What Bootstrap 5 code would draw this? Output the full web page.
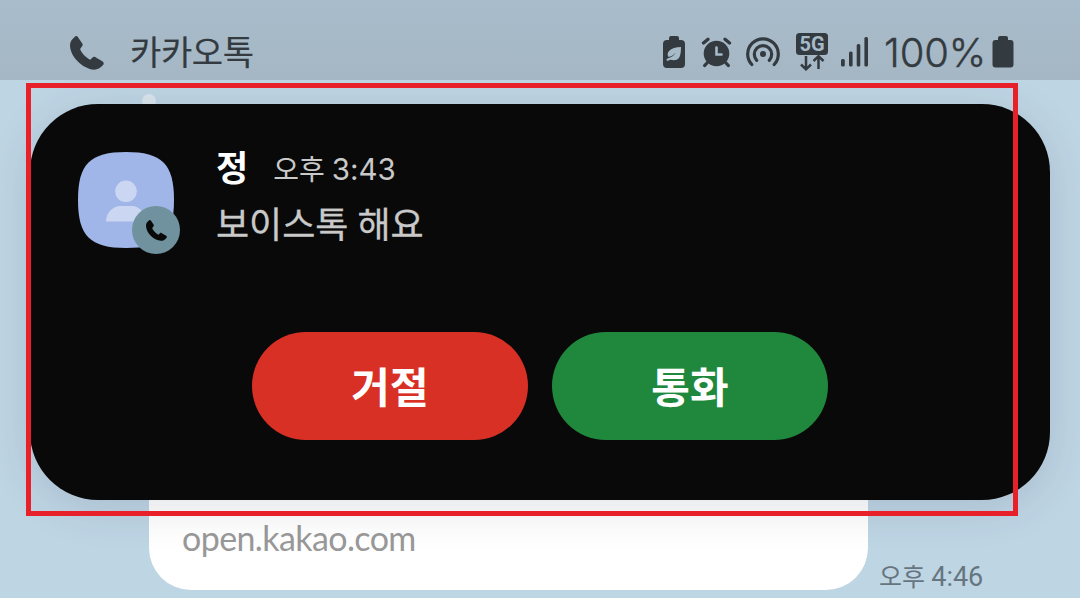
<!DOCTYPE html>
<html lang="ko">
<head>
    <meta charset="utf-8">
    <title>보이스톡</title>
    <link href="https://cdn.jsdelivr.net/npm/bootstrap@5.3.0/dist/css/bootstrap.min.css" rel="stylesheet">
    <style>
        body {
            height: 598px;
            background: #bed5e4;
            font-family: Roboto, "Noto Sans CJK KR", sans-serif;
        }
        svg { display: block; flex: none; }

        .status-bar {
            height: 80px;
            padding: 25px 66px 0 70px;
            background: linear-gradient(#a9bccb, #a5b7c4);
            color: #333a40;
            z-index: 2;
        }
        .app-name { font-size: 34px; line-height: 54px; letter-spacing: -.4px; margin-left: 26px; padding-top: 1px; -webkit-text-stroke: .2px; }
        .percent { font-family: Inter, sans-serif; font-size: 40px; line-height: 54px; font-weight: 300; width: 102px; margin-left: 15px; letter-spacing: -.1px; padding-top: 1px; -webkit-text-stroke: .4px; }
        .status-icons { height: 54px; }
        .alarm-icon { margin-left: 16px; }
        .hotspot-icon { margin-left: 14px; }
        .data-icon { margin-left: 16px; margin-top: -1px; }
        .signal-icon { margin-left: 13px; }
        .battery-icon { margin-left: 6px; }

        .call-card {
            height: 396px;
            margin: 24.400px 30px 0;
            padding: 48px;
            border-radius: 68px;
            background: #090909;
            box-shadow: 0 8px 44px rgba(40, 50, 80, .14);
            z-index: 1;
        }
        .avatar { width: 96px; height: 96px; margin-right: 42px; }
        .call-badge {
            right: -6px;
            bottom: -6px;
            width: 48px;
            height: 48px;
            background: #70929e;
        }
        .caller { font-size: 35px; line-height: 36px; font-weight: 700; color: #fff; }
        .call-time { font-size: 28px; line-height: 34px; color: #c9c9c9; margin-left: 25px; }
        .call-time .digits { font-family: Inter, sans-serif; font-size: 29.500px; }
        .call-text { font-size: 36px; line-height: 48px; color: #c9c9c9; margin-top: 14px; -webkit-text-stroke: .3px; }
        .call-profile { height: 96px; }
        .call-actions { gap: 24px; margin-top: 84px; }
        .call-btn {
            width: 276px;
            height: 108px;
            padding-top: 10px;
            border: 0;
            font-size: 42px;
            font-weight: 700;
            color: #fff;
        }
        .call-btn-decline, .call-btn-decline:hover { background: #d93026; color: #fff; }
        .call-btn-accept, .call-btn-accept:hover { background: #1f883d; color: #fff; }

        .chat-row { padding-left: 149px; }
        .bubble {
            width: 719px;
            height: 90px;
            padding: 13px 33px;
            border-radius: 0 0 42px 42px;
            background: #fff;
            color: #999;
            font-family: Lato, sans-serif;
            font-size: 34px;
            letter-spacing: -.6px;
            line-height: 50px;
        }
        .sent-time { font-size: 25px; line-height: 24px; color: #66757f; margin-left: 11px; }
        .sent-time .digits { font-size: 27px; }
        .bubble-dot { left: 142px; top: 94px; width: 14px; height: 14px; background: #d9e5ed; z-index: 1; }

        .outline-box {
            left: 26px;
            top: 82.500px;
            width: 992px;
            height: 433px;
            border: 5px solid #e8202a;
            z-index: 3;
        }
    </style>
</head>
<body class="position-relative overflow-hidden d-flex flex-column">

    <header class="status-bar position-relative d-flex align-items-start flex-shrink-0">
        <div class="d-flex align-items-center">
            <svg width="34" height="34" viewBox="0 0 104 104" fill="currentColor">
                <path id="handset" d="M14 3C17-1 22 0 24 3L38 24C40 28 38 31 35 34L31 40C34 52 50 67 62 73L69 66C72 63 75 63 78 65L100 78C104 81 104 86 101 89C93 99 84 103 74 103C38 100 0 62 0 28C0 18 5 11 14 3Z"/>
            </svg>
            <span class="app-name">카카오톡</span>
        </div>
        <div class="status-icons ms-auto d-flex align-items-center">
            <!-- power saving -->
            <svg width="22" height="32" viewBox="0 0 22 32" fill="currentColor">
                <path d="M6 4V2Q6 0 8 0H14Q16 0 16 2V4H18Q22 4 22 8V28Q22 32 18 32H4Q0 32 0 28V8Q0 4 4 4Z"/>
                <path d="M18 11Q10 11 6 15Q3.500 18 5.500 21Q9 20.500 13 16.500Q10 21 3.500 23L4 25L7.500 23.800Q14 25.500 16.500 21Q18 18 18 11Z" fill="#a7bac8"/>
            </svg>
            <!-- alarm -->
            <svg class="alarm-icon" width="31" height="31" viewBox="0 0 31 31" fill="none" stroke="currentColor" stroke-width="3.300" stroke-linecap="round">
                <circle cx="15.500" cy="16.500" r="12.800" fill="currentColor" stroke="none"/>
                <path d="M2.500 6L7 2.200M28.500 6L24 2.200M6 26L3.700 28.500M25 26L27.300 28.500"/>
                <path d="M15.500 10.500V17.500H20.500" stroke="#a7bac8" stroke-width="2.600"/>
            </svg>
            <!-- hotspot -->
            <svg class="hotspot-icon" width="34" height="30" viewBox="0 0 34 30" fill="none" stroke="currentColor" stroke-width="3.200" stroke-linecap="round">
                <circle cx="17" cy="17" r="3" fill="currentColor" stroke="none"/>
                <path d="M5.800 27.500A15.300 15.300 0 1 1 28.200 27.500"/>
                <path d="M10.700 23.300A8.700 8.700 0 1 1 23.300 23.300"/>
            </svg>
            <!-- 5G data -->
            <svg class="data-icon" width="32" height="38" viewBox="0 0 32 38">
                <rect width="32" height="22" rx="3.500" fill="currentColor"/>
                <text x="16" y="18" text-anchor="middle" font-size="20" font-weight="700" fill="#a7bac8">5G</text>
                <path d="M10 23V36M5 31.500L10 36.300L15 31.500M22.500 36V24M17.500 28L22.500 23.200L27.500 28" fill="none" stroke="currentColor" stroke-width="2.500"/>
            </svg>
            <!-- signal -->
            <svg class="signal-icon" width="28" height="30" viewBox="0 0 28 30" fill="currentColor">
                <rect y="22" width="3.800" height="7.500" rx="1.500"/>
                <rect x="8" y="14.500" width="3.600" height="15" rx="1.500"/>
                <rect x="15.700" y="7" width="3.600" height="22.500" rx="1.500"/>
                <rect x="23.400" width="3.600" height="29.500" rx="1.500"/>
            </svg>
            <span class="percent">100%</span>
            <svg class="battery-icon" width="22" height="32" viewBox="0 0 22 32" fill="currentColor">
                <path d="M6 4V2Q6 0 8 0H14Q16 0 16 2V4H18.500Q21.500 4 21.500 7V28.500Q21.500 31.500 18.500 31.500H3.500Q.5 31.500 .5 28.500V7Q.5 4 3.500 4Z"/>
            </svg>
        </div>
    </header>

    <span class="bubble-dot position-absolute rounded-circle"></span>

    <section class="call-card position-relative flex-shrink-0">
        <div class="call-profile d-flex">
            <div class="avatar position-relative">
                <svg width="96" height="96" viewBox="0 0 96 96">
                    <path d="M48 0C84 0 96 12 96 48S84 96 48 96S0 84 0 48S12 0 48 0Z" fill="#a0b5e8"/>
                    <circle cx="48" cy="39.300" r="10.800" fill="#cbd6f2"/>
                    <path d="M28 69.500C28 61 35 54 42 54H54C61 54 68 61 68 69.500Z" fill="#cbd6f2"/>
                </svg>
                <span class="call-badge position-absolute rounded-circle d-flex align-items-center justify-content-center">
                    <svg width="21" height="21" viewBox="0 0 104 104" fill="#090909"><use href="#handset"/></svg>
                </span>
            </div>
            <div>
                <div class="d-flex align-items-center">
                    <span class="caller">정</span>
                    <span class="call-time">오후 <span class="digits">3:43</span></span>
                </div>
                <div class="call-text">보이스톡 해요</div>
            </div>
        </div>
        <div class="call-actions d-flex justify-content-center">
            <button class="call-btn call-btn-decline btn rounded-pill">거절</button>
            <button class="call-btn call-btn-accept btn rounded-pill">통화</button>
        </div>
    </section>

    <div class="chat-row d-flex align-items-end">
        <div class="bubble">open.kakao.com</div>
        <span class="sent-time">오후 <span class="digits">4:46</span></span>
    </div>

    <div class="outline-box position-absolute"></div>

    <script src="https://cdn.jsdelivr.net/npm/bootstrap@5.3.0/dist/js/bootstrap.bundle.min.js"></script>
</body>
</html>
